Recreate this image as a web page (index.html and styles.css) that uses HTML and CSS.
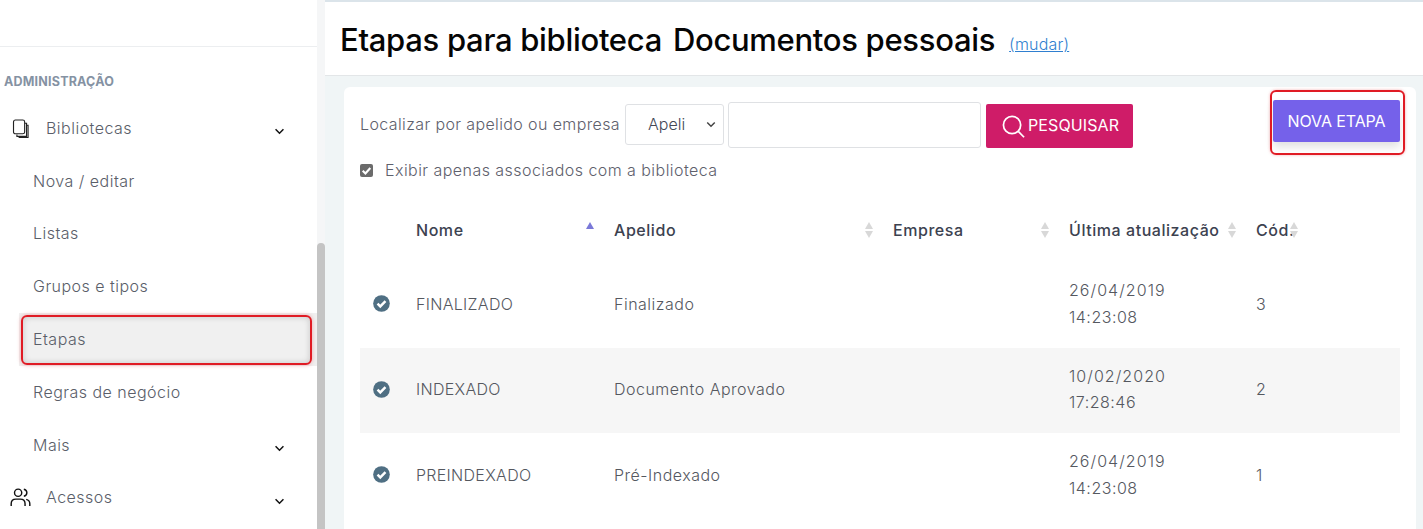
FILE: index.html
```html
<!DOCTYPE html>
<html lang="pt-BR">
<head>
<meta charset="utf-8">
<title>Etapas</title>
<link rel="stylesheet" href="styles.css">
</head>
<body>
<div class="app">
  <aside class="sidebar">
    <div class="side-scroll">
      <div class="brand"></div>
      <div class="section-title">ADMINISTRAÇÃO</div>
      <nav class="menu">
        <a class="item top">
          <svg class="ico" viewBox="0 0 18 20" fill="none" stroke="#222" stroke-width="1.2"><path d="M13.5 4.5h1.9v13.8H5.2v-2"/><path d="M15.4 6.5h1.6v13H7"/><rect x="1.6" y="1" width="11.8" height="14.6" rx="2"/></svg>
          <span>Bibliotecas</span>
          <svg class="chev" viewBox="0 0 12 8" fill="none" stroke="#111" stroke-width="1.7"><path d="M1.5 1.5 6 6l4.5-4.5"/></svg>
        </a>
        <a class="item sub">Nova / editar</a>
        <a class="item sub">Listas</a>
        <a class="item sub">Grupos e tipos</a>
        <a class="item sub active">Etapas<i class="mark mark-side"></i></a>
        <a class="item sub">Regras de negócio</a>
        <a class="item sub">Mais
          <svg class="chev" viewBox="0 0 12 8" fill="none" stroke="#111" stroke-width="1.7"><path d="M1.5 1.5 6 6l4.5-4.5"/></svg>
        </a>
        <a class="item top">
          <svg class="ico ico-users" viewBox="0 0 22 20" fill="none" stroke="#111" stroke-width="1.5"><circle cx="8.5" cy="5" r="3.8"/><path d="M1.2 19v-2.5c0-3 2.2-4.8 5-4.8h4.6c2.8 0 5 1.800 5 4.800V19"/><path d="M14.500 1.300c2 .4 3.200 1.900 3.200 3.700s-1.200 3.300-3.200 3.700"/><path d="M17 12c2.400.5 3.800 2.200 3.800 4.600V19"/></svg>
          <span>Acessos</span>
          <svg class="chev" viewBox="0 0 12 8" fill="none" stroke="#111" stroke-width="1.7"><path d="M1.5 1.5 6 6l4.5-4.500"/></svg>
        </a>
      </nav>
    </div>
    <div class="scrollbar"><div class="thumb"></div></div>
  </aside>
  <main class="main">
    <header class="page-head">
      <h1>Etapas para biblioteca <span class="lib-name">Documentos pessoais</span></h1>
      <a class="change">(mudar)</a>
    </header>
    <section class="card">
      <div class="card-top">
        <div class="filters">
          <form class="search-row">
            <label class="search-label">Localizar por apelido ou empresa</label>
            <div class="select-box">Apeli
              <svg viewBox="0 0 12 8" fill="none" stroke="#444" stroke-width="1.8"><path d="M1.500 1.500 6 6l4.500-4.500"/></svg>
            </div>
            <div class="text-box"></div>
            <button class="btn-search" type="button">
              <svg viewBox="0 0 24 24" fill="none" stroke="#fff" stroke-width="1.800"><circle cx="10.500" cy="10.500" r="9"/><path d="m17 17 6 6.200"/></svg>
              PESQUISAR
            </button>
          </form>
          <label class="only">
            <span class="check"><svg viewBox="0 0 12 12" fill="none" stroke="#fff" stroke-width="2"><path d="m2.500 6.200 2.500 2.500 4.500-5"/></svg></span>
            Exibir apenas associados com a biblioteca
          </label>
        </div>
        <div class="new-wrap">
          <button class="btn-new" type="button">NOVA ETAPA</button>
          <i class="mark mark-new"></i>
        </div>
      </div>
      <table class="grid">
        <colgroup>
          <col class="c0"><col class="c1"><col class="c2"><col class="c3"><col class="c4"><col class="c5"><col>
        </colgroup>
        <thead>
          <tr>
            <th></th>
            <th>Nome<span class="sort asc"></span></th>
            <th>Apelido<span class="sort"></span></th>
            <th>Empresa<span class="sort"></span></th>
            <th>Última atualização<span class="sort"></span></th>
            <th>Cód.<span class="sort"></span></th>
            <th></th>
          </tr>
        </thead>
        <tbody>
          <tr>
            <td class="tick"><svg viewBox="0 0 18 18"><circle cx="9" cy="9" r="8.800" fill="#4f6f83"/><path d="m4.800 9.200 2.900 2.900L13.200 6.500" fill="none" stroke="#fff" stroke-width="2.600"/></svg></td>
            <td>FINALIZADO</td><td class="nick">Finalizado</td><td></td><td class="when"><span class="date">26/04/2019</span><br>14:23:08</td><td>3</td><td></td>
          </tr>
          <tr class="odd">
            <td class="tick"><svg viewBox="0 0 18 18"><circle cx="9" cy="9" r="8.800" fill="#4f6f83"/><path d="m4.800 9.200 2.900 2.900L13.200 6.500" fill="none" stroke="#fff" stroke-width="2.600"/></svg></td>
            <td>INDEXADO</td><td class="nick">Documento Aprovado</td><td></td><td class="when"><span class="date">10/02/2020</span><br>17:28:46</td><td>2</td><td></td>
          </tr>
          <tr>
            <td class="tick"><svg viewBox="0 0 18 18"><circle cx="9" cy="9" r="8.800" fill="#4f6f83"/><path d="m4.800 9.200 2.900 2.900L13.200 6.500" fill="none" stroke="#fff" stroke-width="2.600"/></svg></td>
            <td>PREINDEXADO</td><td class="nick">Pré-Indexado</td><td></td><td class="when"><span class="date">26/04/2019</span><br>14:23:08</td><td>1</td><td></td>
          </tr>
        </tbody>
      </table>
    </section>
  </main>
</div>
</body>
</html>
```
FILE: styles.css
```css
* { box-sizing: border-box; }
html, body { margin: 0; height: 529px; overflow: hidden; }
body { font-family: Inter, "Noto Sans", sans-serif; font-size: 16px; color: #6b6f82; background: #f0f5f6; }
.app { display: flex; height: 529px; }

.sidebar { width: 325px; flex: none; display: flex; background: #fff; height: 529px; }
.side-scroll { width: 317px; flex: none; }
.brand { height: 47px; border-bottom: 1px solid #eceef0; }
.section-title { padding: 27px 0 0 4px; height: 55px; font-size: 12.5px; font-weight: 700; line-height: 16px; color: #8592a3; letter-spacing: .2px; }
.scrollbar { width: 8px; background: #f5f6f7; padding-top: 243px; }
.thumb { height: 286px; background: #c4c4c4; border-radius: 4px 4px 0 0; }

.menu { display: flex; flex-direction: column; }
.item { position: relative; display: flex; align-items: center; height: 52.8px; padding-bottom: 1px; font-size: 16px; font-weight: 300; color: #5a5e69; letter-spacing: .48px; }
.item.top { padding-left: 46px; }
.item.sub { padding-left: 33px; }
.item.active { margin-left: 19px; padding-left: 14px; background: #f0f0f0; }
.ico { position: absolute; left: 12px; top: 17px; width: 17px; height: 19px; }
.ico-users { left: 10px; width: 21px; top: 16px; }
.chev { position: absolute; left: 274px; top: 26px; width: 11px; height: 7px; }

.mark { position: absolute; border: 2px solid #e01b24; border-radius: 6px; box-shadow: 0 0 4px rgba(224, 27, 36, .35), inset 0 0 6px rgba(0, 0, 0, .18); }
.mark-side { left: 2px; top: 2px; width: 291px; height: 50px; }
.mark-new { left: -3px; top: -10px; width: 135px; height: 65px; box-shadow: 0 0 3px rgba(224, 27, 36, .35); }

.main { flex: 1; min-width: 0; }
.page-head { height: 76px; padding: 20px 0 0 15px; background: #fff; border-top: 2px solid #dbe4ea; border-bottom: 1px solid #e3e6e8; display: flex; align-items: flex-start; }
h1 { margin: 0; font-size: 31px; line-height: 36px; font-weight: 500; color: #050505; letter-spacing: -.3px; }
.lib-name { margin-left: 3px; }
.change { margin: 11px 0 0 14px; font-size: 16px; font-weight: 300; color: #2f7fd0; text-decoration: underline; line-height: 22px; letter-spacing: .2px; }

.card { margin: 11px 7px 0 19px; height: 460px; background: #fff; border-radius: 6px 6px 0 0; padding: 15px 16px 0; }
.card-top { display: flex; justify-content: space-between; height: 97px; }
.filters { display: flex; flex-direction: column; }
.search-row { display: flex; align-items: center; height: 46px; }
.search-label { width: 265px; margin-top: -2px; font-size: 16px; font-weight: 300; color: #5e606c; letter-spacing: .38px; white-space: nowrap; }
.select-box { display: flex; align-items: center; justify-content: space-between; width: 99px; height: 41px; padding: 0 7px 0 22px; margin-top: -2px; border: 1px solid #dfe1e4; border-radius: 3px; font-size: 16px; font-weight: 300; color: #444856; }
.select-box svg { width: 10px; height: 7px; }
.text-box { width: 253px; height: 46px; margin-left: 4px; border: 1px solid #dfe1e4; border-radius: 3px; }
.btn-search { display: flex; align-items: center; justify-content: flex-start; gap: 3px; width: 147px; height: 44px; margin: 2px 0 0 5px; padding: 0 0 2px 16px; border: 0; border-radius: 2px; background: #cf1c68; color: #fff; font: 400 16px Inter, sans-serif; letter-spacing: .1px; white-space: nowrap; }
.btn-search svg { width: 23px; height: 23px; margin-top: 2px; }
.only { display: flex; align-items: center; gap: 12px; margin-top: 10px; font-size: 16px; font-weight: 300; line-height: 24px; color: #5e606c; letter-spacing: .45px; white-space: nowrap; }
.check { width: 13px; height: 13px; border-radius: 2px; background: #6b6b6b; display: block; flex: none; }
.check svg { display: block; width: 13px; height: 13px; }
.new-wrap { position: relative; width: 127px; height: 42px; margin-top: -2px; }
.btn-new { width: 127px; height: 42px; border: 0; border-radius: 2px; background: #7561ea; color: #fff; font: 400 16px Inter, sans-serif; letter-spacing: -.1px; box-shadow: 0 5px 9px rgba(0, 0, 0, .12); }

.grid { width: 1040px; border-collapse: collapse; table-layout: fixed; }
.c0 { width: 42px; } .c1 { width: 198px; } .c2 { width: 279px; } .c3 { width: 176px; } .c4 { width: 187px; } .c5 { width: 62px; }
th { position: relative; height: 63px; padding: 0 0 2px 14px; text-align: left; font-size: 16px; font-weight: 500; color: #3c4250; letter-spacing: .55px; white-space: nowrap; }
td { height: 85.5px; padding: 0 0 2px 14px; font-size: 16px; font-weight: 300; line-height: 26.500px; color: #55585f; letter-spacing: .3px; white-space: nowrap; }
td.nick { letter-spacing: .5px; }
td.when { letter-spacing: .5px; }
.date { letter-spacing: 1.05px; }
.odd td { background: #f6f6f6; }
td.tick { padding: 0 0 0 13px; }
.tick svg { display: block; width: 17px; height: 17px; margin-top: -2px; }
.sort { position: absolute; right: 5px; top: 23px; width: 9px; height: 16px; }
.sort::before, .sort::after { content: ""; position: absolute; left: 0; border-left: 4.500px solid transparent; border-right: 4.500px solid transparent; }
.sort::before { top: 0; border-bottom: 7px solid #d8d8d8; }
.sort::after { bottom: 0; border-top: 7px solid #d8d8d8; }
.sort.asc::before { border-bottom-color: #7a78d8; }
.sort.asc::after { display: none; }
```
